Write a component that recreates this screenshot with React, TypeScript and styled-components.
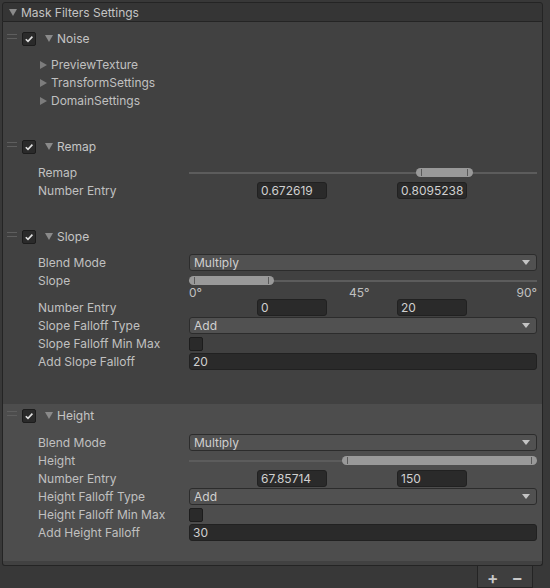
import React from 'react';
import styled, { createGlobalStyle } from 'styled-components';

const GlobalStyle = createGlobalStyle`
  html, body {
    margin: 0;
    padding: 0;
    background: #383838;
  }
  body {
    font-family: Inter, 'Noto Sans', sans-serif;
    font-size: 12px;
    color: #c0c0c0;
  }
`;

const Window = styled.div`
  width: 550px;
  height: 588px;
  box-sizing: border-box;
  padding: 2px 7px 0 2px;
  display: flex;
  flex-direction: column;
  overflow: hidden;
`;

const HeaderBar = styled.div`
  height: 20px;
  box-sizing: border-box;
  border: 1px solid #242424;
  border-radius: 3px 3px 0 0;
  background: #353535;
  display: flex;
  align-items: center;
  padding: 1px 0 0 6px;
  gap: 4px;
  color: #c4c4c4;
`;

const ListBox = styled.div`
  height: 545px;
  box-sizing: border-box;
  border: 1px solid #242424;
  border-top: none;
  border-radius: 0 0 3px 3px;
  background: #414141;
  padding: 6px 0 4px 0;
  display: flex;
  flex-direction: column;
`;

const Footer = styled.div`
  align-self: flex-end;
  margin-right: 10px;
  width: 56px;
  height: 22px;
  box-sizing: border-box;
  border: 1px solid #242424;
  border-top: none;
  background: #3e3e3e;
  display: flex;
  justify-content: center;
  align-items: center;
  gap: 13px;
  color: #c8c8c8;
  font-size: 17px;
  font-weight: 600;
  padding-top: 2px;
`;

const Element = styled.div<{ $selected?: boolean; $pad: number; $grow?: boolean }>`
  background: ${(p) => (p.$selected ? '#4d4d4d' : 'transparent')};
  padding-bottom: ${(p) => p.$pad}px;
  flex: ${(p) => (p.$grow ? 1 : 'none')};
`;

const ElementHeader = styled.div<{ $top: number; $gap: number }>`
  height: 22px;
  display: flex;
  align-items: center;
  margin-top: ${(p) => p.$top}px;
  margin-bottom: ${(p) => p.$gap}px;
`;

const DragHandle = styled.div`
  width: 10px;
  height: 5px;
  margin-left: 4px;
  margin-bottom: 5px;
  border-top: 1px solid #5e5e5e;
  border-bottom: 1px solid #5e5e5e;
  box-sizing: border-box;
`;

const CheckBox = styled.div`
  width: 14px;
  height: 14px;
  box-sizing: border-box;
  border: 1px solid #1c1c1c;
  border-radius: 2px;
  background: #2a2a2a;
  display: flex;
  align-items: center;
  justify-content: center;
  flex: none;
`;

const ElementTitle = styled.span`
  margin-left: 4px;
  color: #c4c4c4;
`;

const Row = styled.div`
  height: 18px;
  display: flex;
  align-items: center;
  padding: 0 5px 0 35px;
`;

const FoldRow = styled.div`
  height: 18px;
  display: flex;
  align-items: center;
  padding-left: 37px;
  gap: 4px;
`;

const Label = styled.div`
  width: 151px;
  flex: none;
  white-space: nowrap;
`;

const Field = styled.div`
  flex: 1;
  min-width: 0;
  display: flex;
  align-items: center;
`;

const Dropdown = styled.div`
  flex: 1;
  height: 17px;
  box-sizing: border-box;
  border: 1px solid #2c2c2c;
  border-radius: 3px;
  background: #515151;
  display: flex;
  align-items: center;
  justify-content: space-between;
  padding: 0 6px 0 4px;
  color: #d0d0d0;
`;

const TextBox = styled.div<{ $width?: number }>`
  width: ${(p) => (p.$width ? `${p.$width}px` : 'auto')};
  flex: ${(p) => (p.$width ? 'none' : 1)};
  height: 17px;
  box-sizing: border-box;
  border: 1px solid #212121;
  border-radius: 3px;
  background: #2a2a2a;
  display: flex;
  align-items: center;
  padding: 0 3px;
  color: #d0d0d0;
`;

const PairFields = styled.div`
  flex: 1;
  display: flex;
  padding-left: 68px;
  gap: 70px;
`;

const Track = styled.div`
  flex: 1;
  height: 9px;
  position: relative;
  display: flex;
  align-items: center;
  &::before {
    content: '';
    flex: 1;
    height: 2px;
    background: #5c5c5c;
  }
`;

const Thumb = styled.div`
  position: absolute;
  top: 0;
  height: 9px;
  border-radius: 4.5px;
  background: #999999;
  &::before,
  &::after {
    content: '';
    position: absolute;
    top: 1px;
    width: 1px;
    height: 7px;
    background: #5a5a5a;
  }
  &::before {
    left: 5px;
  }
  &::after {
    right: 5px;
  }
`;

const Ticks = styled.div`
  height: 13px;
  margin-top: -4px;
  line-height: 13px;
  display: flex;
  padding: 0 5px 0 186px;
  justify-content: space-between;
`;

const Tri = styled.svg`
  flex: none;
`;

const DownTri = ({ color = '#8a8a8a' }: { color?: string }) => (
  <Tri width="8" height="7" viewBox="0 0 8 7">
    <polygon points="0,0 8,0 4,7" fill={color} />
  </Tri>
);

const RightTri = () => (
  <Tri width="7" height="8" viewBox="0 0 7 8">
    <polygon points="0,0 7,4 0,8" fill="#7c7c7c" />
  </Tri>
);

const DropArrow = () => (
  <Tri width="8" height="5" viewBox="0 0 8 5">
    <polygon points="0,0 8,0 4,5" fill="#c4c4c4" />
  </Tri>
);

const Check = () => (
  <svg width="10" height="10" viewBox="0 0 10 10">
    <polyline points="1.8,5.2 4,7.4 8.4,2.6" fill="none" stroke="#e0e0e0" strokeWidth="1.6" />
  </svg>
);

function MinMaxSlider({ lo, hi, max }: { lo: number; hi: number; max: number }) {
  const span = 338;
  const left = (lo / max) * span;
  const width = ((hi - lo) / max) * span + 10;
  return (
    <Track>
      <Thumb style={{ left, width }} />
    </Track>
  );
}

function Header({ title, top = 0, gap = 6 }: { title: string; top?: number; gap?: number }) {
  return (
    <ElementHeader $top={top} $gap={gap}>
      <DragHandle />
      <CheckBox style={{ marginLeft: 5 }}>
        <Check />
      </CheckBox>
      <span style={{ width: 9 }} />
      <DownTri />
      <ElementTitle>{title}</ElementTitle>
    </ElementHeader>
  );
}

function Prop({ label, children }: { label: string; children: React.ReactNode }) {
  return (
    <Row>
      <Label>{label}</Label>
      <Field>{children}</Field>
    </Row>
  );
}

function Pair({ a, b }: { a: string; b: string }) {
  return (
    <PairFields>
      <TextBox $width={70}>{a}</TextBox>
      <TextBox $width={70}>{b}</TextBox>
    </PairFields>
  );
}

function Select({ value }: { value: string }) {
  return (
    <Dropdown>
      <span>{value}</span>
      <DropArrow />
    </Dropdown>
  );
}

export default function App() {
  return (
    <>
      <GlobalStyle />
      <Window>
        <HeaderBar>
          <DownTri />
          <span>Mask Filters Settings</span>
        </HeaderBar>
        <ListBox>
          <Element $pad={26}>
            <Header title="Noise" />
            {['PreviewTexture', 'TransformSettings', 'DomainSettings'].map((n) => (
              <FoldRow key={n}>
                <RightTri />
                <span>{n}</span>
              </FoldRow>
            ))}
          </Element>

          <Element $pad={26}>
            <Header title="Remap" />
            <Prop label="Remap">
              <MinMaxSlider lo={0.672619} hi={0.8095238} max={1} />
            </Prop>
            <Prop label="Number Entry">
              <Pair a="0.672619" b="0.8095238" />
            </Prop>
          </Element>

          <Element $pad={33}>
            <Header title="Slope" />
            <Prop label="Blend Mode">
              <Select value="Multiply" />
            </Prop>
            <Prop label="Slope">
              <MinMaxSlider lo={0} hi={20} max={90} />
            </Prop>
            <Ticks>
              <span>0°</span>
              <span>45°</span>
              <span>90°</span>
            </Ticks>
            <Prop label="Number Entry">
              <Pair a="0" b="20" />
            </Prop>
            <Prop label="Slope Falloff Type">
              <Select value="Add" />
            </Prop>
            <Prop label="Slope Falloff Min Max">
              <CheckBox />
            </Prop>
            <Prop label="Add Slope Falloff">
              <TextBox>20</TextBox>
            </Prop>
          </Element>

          <Element $selected $pad={0} $grow>
            <Header title="Height" top={1} gap={7} />
            <Prop label="Blend Mode">
              <Select value="Multiply" />
            </Prop>
            <Prop label="Height">
              <MinMaxSlider lo={67.85714} hi={150} max={150} />
            </Prop>
            <Prop label="Number Entry">
              <Pair a="67.85714" b="150" />
            </Prop>
            <Prop label="Height Falloff Type">
              <Select value="Add" />
            </Prop>
            <Prop label="Height Falloff Min Max">
              <CheckBox />
            </Prop>
            <Prop label="Add Height Falloff">
              <TextBox>30</TextBox>
            </Prop>
          </Element>
        </ListBox>
        <Footer>
          <span>+</span>
          <span>−</span>
        </Footer>
      </Window>
    </>
  );
}
